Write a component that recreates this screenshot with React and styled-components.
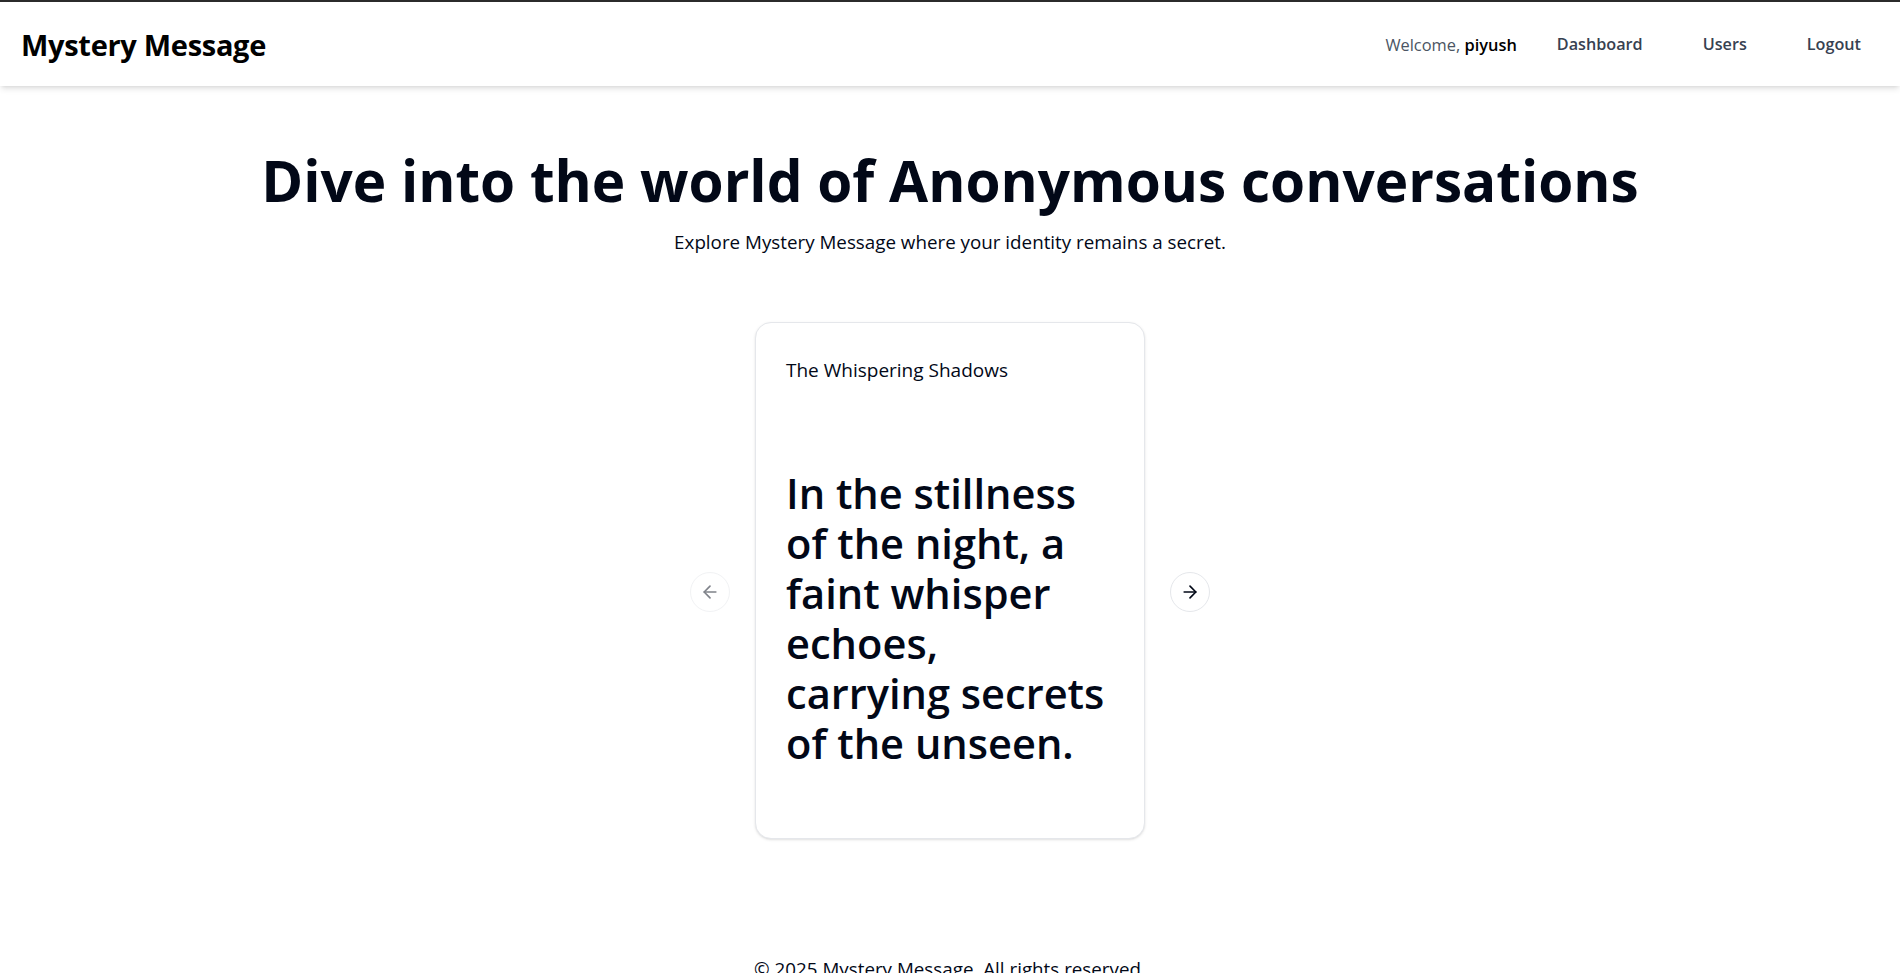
import styled, { createGlobalStyle } from "styled-components";
import { ArrowLeft, ArrowRight } from "lucide-react";

const GlobalStyle = createGlobalStyle`
  * { box-sizing: border-box; }
  body {
    margin: 0;
    background: #ffffff;
    font-family: "Open Sans", "Noto Sans", sans-serif;
    color: #020817;
  }
`;

const message = {
  title: "The Whispering Shadows",
  content: "In the stillness of the night, a faint whisper echoes, carrying secrets of the unseen.",
};

const App = () => {
  return (
    <Page>
      <GlobalStyle />
      <Nav>
        <Logo>Mystery Message</Logo>
        <NavLinks>
          <Welcome>
            Welcome, <strong>piyush</strong>
          </Welcome>
          <NavButton>Dashboard</NavButton>
          <NavButton>Users</NavButton>
          <NavButton>Logout</NavButton>
        </NavLinks>
      </Nav>

      <Main>
        <Hero>
          <Heading>Dive into the world of Anonymous conversations</Heading>
          <Subtitle>Explore Mystery Message where your identity remains a secret.</Subtitle>
        </Hero>

        <Carousel>
          <Item>
            <Card>
              <CardTitle>{message.title}</CardTitle>
              <CardBody>{message.content}</CardBody>
            </Card>
          </Item>
          <ArrowButton $side="left" disabled>
            <ArrowLeft size={20} strokeWidth={2} />
          </ArrowButton>
          <ArrowButton $side="right">
            <ArrowRight size={20} strokeWidth={2} />
          </ArrowButton>
        </Carousel>
      </Main>

      <Footer>© 2025 Mystery Message. All rights reserved.</Footer>
    </Page>
  );
};

export default App;

const Page = styled.div`
  min-height: 100vh;
  display: flex;
  flex-direction: column;
`;

const Nav = styled.nav`
  height: 86px;
  display: flex;
  align-items: center;
  justify-content: space-between;
  padding: 0 9px 0 21px;
  border-top: 2px solid #2b2b2b;
  background: #fff;
  box-shadow: 0 4px 6px -1px rgba(0, 0, 0, 0.1), 0 2px 4px -2px rgba(0, 0, 0, 0.1);
`;

const Logo = styled.a`
  font-size: 29px;
  font-weight: 700;
  color: #000;
  letter-spacing: -0.3px;
`;

const NavLinks = styled.div`
  display: flex;
  align-items: center;
`;

const Welcome = styled.span`
  font-size: 16.4px;
  color: #4b5563;
  margin-right: 10px;

  strong {
    color: #000;
    font-weight: 600;
  }
`;

const NavButton = styled.button`
  border: none;
  background: transparent;
  font-family: inherit;
  font-size: 16.2px;
  font-weight: 600;
  color: #374151;
  padding: 0 30px;
  height: 50px;
  cursor: pointer;
`;

const Main = styled.main`
  flex: 1;
  display: flex;
  flex-direction: column;
  align-items: center;
  padding: 64px 20px 111px;
`;

const Hero = styled.section`
  text-align: center;
  margin-bottom: 61px;
`;

const Heading = styled.h1`
  margin: 0 0 18px;
  font-size: 56.7px;
  line-height: 60px;
  font-weight: 700;
  color: #020817;
`;

const Subtitle = styled.p`
  margin: 0;
  font-size: 18.8px;
  line-height: 28px;
  color: #020817;
`;

const Carousel = styled.div`
  position: relative;
  width: 400px;
`;

const Item = styled.div`
  padding: 5px;
`;

const Card = styled.div`
  border: 1px solid #e5e7eb;
  border-radius: 16px;
  background: #fff;
  box-shadow: 0 1px 3px 0 rgba(0, 0, 0, 0.1), 0 1px 2px -1px rgba(0, 0, 0, 0.1);
  padding: 33px 34px 70px 30px;
`;

const CardTitle = styled.h3`
  margin: 0;
  font-size: 19px;
  line-height: 28px;
  font-weight: 400;
  color: #020817;
`;

const CardBody = styled.p`
  margin: 84px 0 0;
  font-size: 41.6px;
  line-height: 50px;
  font-weight: 600;
  color: #020817;
`;

const ArrowButton = styled.button`
  position: absolute;
  top: calc(50% + 11px);
  ${({ $side }) => ($side === "left" ? "left: -60px;" : "right: -60px;")}
  transform: translateY(-50%);
  width: 40px;
  height: 40px;
  border-radius: 50%;
  border: 1px solid #e5e7eb;
  background: #fff;
  display: flex;
  align-items: center;
  justify-content: center;
  color: #020817;
  padding: 0;
  cursor: pointer;

  &:disabled {
    opacity: 0.5;
    cursor: default;
  }
`;

const Footer = styled.footer`
  text-align: center;
  font-size: 18.8px;
  line-height: 28px;
  padding: 0 0 24px;
  color: #020817;
`;
